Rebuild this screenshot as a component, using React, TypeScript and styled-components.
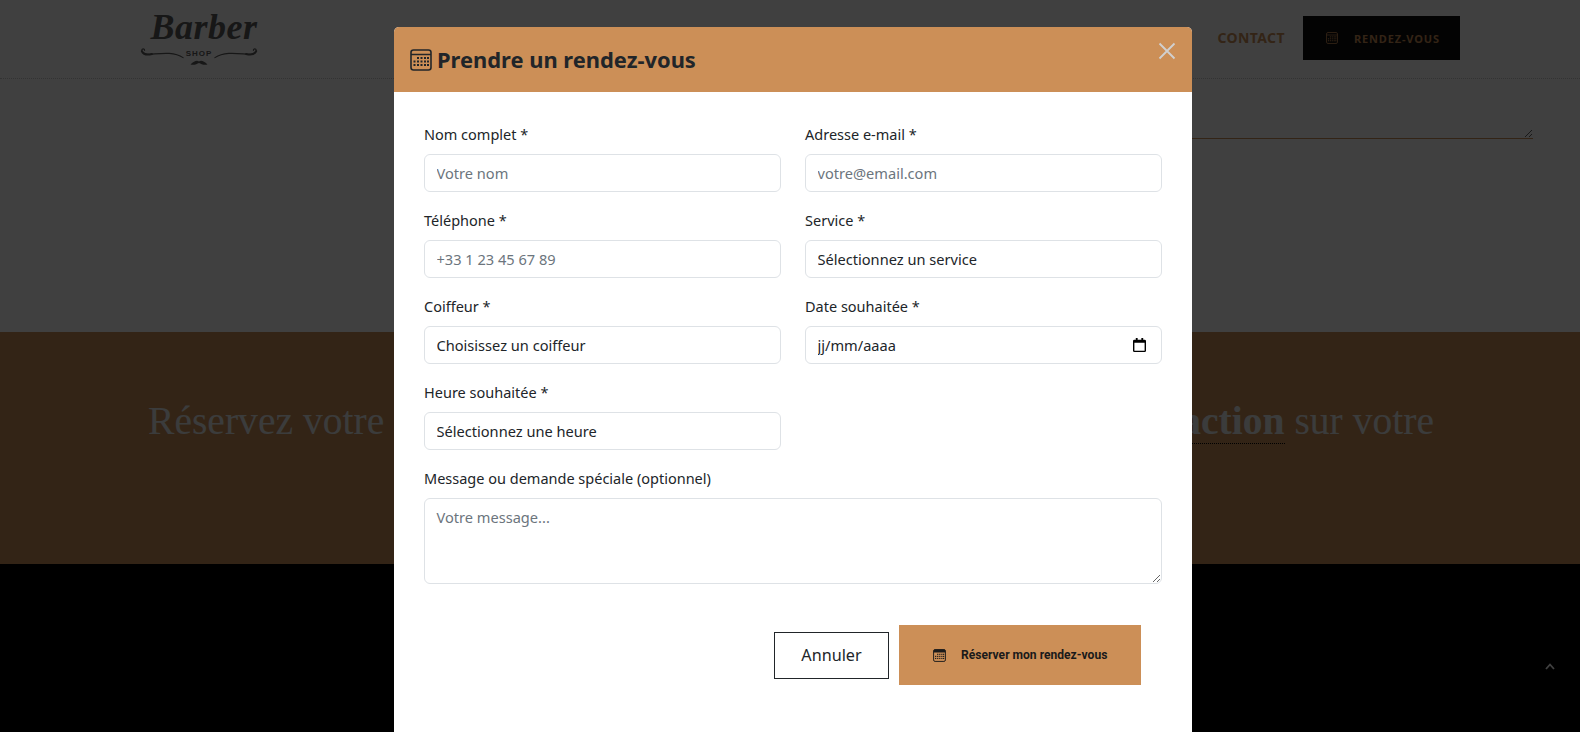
import styled, { createGlobalStyle } from "styled-components";

const GlobalStyle = createGlobalStyle`
  html, body {
    margin: 0;
    padding: 0;
    height: 732px;
    overflow: hidden;
    background: #fff;
    font-family: "Noto Sans", "Open Sans", sans-serif;
    color: #212529;
  }
  * { box-sizing: border-box; }
`;

const Page = styled.div`
  height: 732px;
  overflow: hidden;
  display: flex;
  flex-direction: column;
`;

const Header = styled.header`
  height: 79px;
  flex: none;
  display: flex;
  align-items: flex-start;
  justify-content: space-between;
  padding: 11px 120px 0 140px;
  border-bottom: 1px dotted #ccc;
`;

const Logo = styled.div`
  width: 118px;
  display: flex;
  flex-direction: column;
  align-items: center;
  color: #5c5c5c;
`;

const LogoWord = styled.span`
  font-family: "Liberation Serif", serif;
  font-style: italic;
  font-weight: 700;
  font-size: 36px;
  line-height: 32px;
  letter-spacing: 0.5px;
  margin: 0 0 4px 10px;
`;

const LogoShop = styled.div`
  display: flex;
  align-items: center;
  gap: 2px;
  height: 13px;
`;

const LogoShopText = styled.span`
  font-family: "Liberation Sans", sans-serif;
  font-weight: 700;
  font-size: 8px;
  line-height: 13px;
  letter-spacing: 1px;
`;

const Nav = styled.nav`
  display: flex;
  align-items: center;
  gap: 18px;
  margin-top: 5px;
`;

const NavLink = styled.a`
  font-size: 14px;
  font-weight: 700;
  letter-spacing: 0.4px;
  margin-top: -2px;
  color: #cc8f57;
`;

const NavButton = styled.a`
  width: 157px;
  height: 44px;
  background: #0c0c0c;
  color: #cc8f57;
  display: flex;
  align-items: center;
  gap: 16px;
  padding-left: 23px;
  font-size: 11px;
  font-weight: 700;
  letter-spacing: 0.85px;
`;

const ContactSection = styled.section`
  height: 253px;
  flex: none;
  display: flex;
  justify-content: flex-end;
  padding-right: 47px;
`;

const ContactMessage = styled.textarea`
  width: 500px;
  height: 60px;
  border: none;
  border-bottom: 1px solid #cc8f57;
  background: transparent;
  outline: none;
`;

const CtaBand = styled.section`
  height: 232px;
  flex: none;
  background: #cc8f57;
  padding: 65px 146px 0 148px;
`;

const CtaTitle = styled.h2`
  margin: 0;
  display: flex;
  justify-content: space-between;
  font-family: "Liberation Serif", serif;
  font-weight: 400;
  font-size: 39.6px;
  line-height: 48px;
  color: #eceef0;
`;

const CtaStrong = styled.strong`
  border-bottom: 1px dotted #000;
`;

const Footer = styled.footer`
  flex: 1;
  background: #000;
`;

const ScrollTop = styled.a`
  position: fixed;
  left: 1545px;
  top: 663px;
  width: 10px;
  height: 7px;
  color: #fff;
  display: flex;
`;

const Backdrop = styled.div`
  position: fixed;
  inset: 0;
  background: rgba(0, 0, 0, 0.75);
  display: flex;
  justify-content: center;
  align-items: flex-start;
  padding: 27px 0 0 6px;
  overflow: hidden;
`;

const Modal = styled.div`
  width: 798px;
  background: #fff;
  border-radius: 5px;
  overflow: hidden;
  flex: none;
`;

const ModalHeader = styled.div`
  height: 65px;
  background: #cc8f57;
  display: flex;
  align-items: center;
  justify-content: space-between;
  padding: 1px 16px 0 16px;
`;

const ModalTitle = styled.h5`
  margin: 0;
  display: flex;
  align-items: center;
  gap: 5px;
  font-size: 21.9px;
  font-weight: 700;
  line-height: 30px;
  color: #212529;
`;

const CloseButton = styled.button`
  width: 18px;
  height: 18px;
  padding: 0;
  margin-top: -18px;
  border: none;
  background: none;
  color: #d0d0d0;
  display: flex;
`;

const Form = styled.form`
  padding: 30px 30px 80px;
`;

const FieldGrid = styled.div`
  display: grid;
  grid-template-columns: 1fr 1fr;
  column-gap: 24px;
`;

const Field = styled.div<{ $wide?: boolean }>`
  margin-bottom: 16px;
  grid-column: ${(p) => (p.$wide ? "1 / -1" : "auto")};
`;

const Label = styled.label`
  display: block;
  height: 24px;
  margin-bottom: 8px;
  font-size: 14.5px;
  line-height: 24px;
  color: #212529;
`;

const controlStyles = `
  display: block;
  width: 100%;
  border: 1px solid #dee2e6;
  border-radius: 6px;
  background: #fff;
  padding: 0 11.5px;
  font-family: "Noto Sans", "Open Sans", sans-serif;
  font-size: 14.6px;
  color: #212529;
  outline: none;
  &::placeholder { color: #6c757d; opacity: 1; }
`;

const Input = styled.input`
  ${controlStyles}
  height: 38px;
`;

const Select = styled.select`
  ${controlStyles}
  height: 38px;
  appearance: none;
`;

const DateWrap = styled.div`
  position: relative;
`;

const DateIcon = styled.span`
  position: absolute;
  right: 16px;
  top: 12px;
  width: 13px;
  height: 14px;
  display: flex;
  color: #000;
`;

const Textarea = styled.textarea`
  ${controlStyles}
  height: 86px;
  padding: 8px 11.5px;
  resize: vertical;
`;

const Actions = styled.div`
  display: flex;
  justify-content: flex-end;
  align-items: center;
  gap: 10px;
  margin-top: 25px;
  padding-right: 21px;
`;

const CancelButton = styled.button`
  width: 115px;
  height: 47px;
  background: #fff;
  border: 1px solid #212529;
  font-family: "Noto Sans", "Open Sans", sans-serif;
  font-size: 16.2px;
  color: #212529;
`;

const SubmitButton = styled.button`
  width: 242px;
  height: 60px;
  background: #cc8f57;
  border: none;
  display: flex;
  align-items: center;
  gap: 15px;
  padding: 0 0 0 34px;
  font-family: Roboto, "Noto Sans", sans-serif;
  font-size: 12.1px;
  font-weight: 700;
  color: #1a1a1a;
`;

function CalendarIcon({ size, filled }: { size: number; filled?: boolean }) {
  return (
    <svg width={size} height={size} viewBox="0 0 22 22" fill="none" style={{ flex: "none" }}>
      <rect x="1" y="1" width="20" height="20" rx="2.5" stroke="currentColor" strokeWidth="1.6" />
      {filled ? (
        <path d="M1 3.5a2.5 2.5 0 0 1 2.5-2.5h15A2.5 2.5 0 0 1 21 3.5V6H1z" fill="currentColor" />
      ) : (
        <path d="M1 5.5h20" stroke="currentColor" strokeWidth="1.4" />
      )}
      {[9, 12.5, 16].map((y) =>
        [4.5, 8, 11.5, 15, 18].map((x) =>
          (y === 9 && x < 8) ? null : (
            <rect key={`${x}-${y}`} x={x - 1} y={y - 1} width="2" height="2" fill="currentColor" />
          )
        )
      )}
    </svg>
  );
}

function NativeDateIcon() {
  return (
    <svg width="13" height="14" viewBox="0 0 14 16" fill="none" preserveAspectRatio="none">
      <path d="M3 0h2v2h4V0h2v2h1.5A1.5 1.5 0 0 1 14 3.5v11a1.5 1.5 0 0 1-1.5 1.5h-11A1.5 1.5 0 0 1 0 14.5v-11A1.5 1.5 0 0 1 1.5 2H3zM1.5 5.5v9h11v-9z" fill="currentColor" />
    </svg>
  );
}

function Flourish({ flip }: { flip?: boolean }) {
  return (
    <svg width="44" height="13" viewBox="0 0 48 13" fill="none" style={{ flex: "none", transform: flip ? "scaleX(-1)" : undefined }}>
      <path d="M47 11C38 5 26 6 16 7C9 8 3 7 2 3C2 1 5 1 5 3" stroke="currentColor" strokeWidth="1.3" strokeLinecap="round" />
      <path d="M2 4C4 8 9 8 13 7" stroke="currentColor" strokeWidth="2.2" strokeLinecap="round" />
    </svg>
  );
}

function Moustache() {
  return (
    <svg width="18" height="6" viewBox="0 0 18 6" style={{ display: "block" }}>
      <path d="M9 1.5C7 0 4 1 0.5 4.5C4 5.5 7 4 9 3C11 4 14 5.5 17.5 4.5C14 1 11 0 9 1.5z" fill="currentColor" />
    </svg>
  );
}

export default function App() {
  return (
    <Page>
      <GlobalStyle />
      <Header>
        <Logo>
          <LogoWord>Barber</LogoWord>
          <LogoShop>
            <Flourish />
            <LogoShopText>SHOP</LogoShopText>
            <Flourish flip />
          </LogoShop>
          <Moustache />
        </Logo>
        <Nav>
          <NavLink>CONTACT</NavLink>
          <NavButton>
            <CalendarIcon size={12} />
            RENDEZ-VOUS
          </NavButton>
        </Nav>
      </Header>

      <ContactSection>
        <ContactMessage />
      </ContactSection>

      <CtaBand>
        <CtaTitle>
          <span>Réservez votre</span>
          <span>
            <CtaStrong>satisfaction</CtaStrong> sur votre
          </span>
        </CtaTitle>
      </CtaBand>

      <Footer />

      <ScrollTop>
        <svg width="10" height="7" viewBox="0 0 10 7" fill="none">
          <path d="M1 6l4-4.5L9 6" stroke="currentColor" strokeWidth="1.8" />
        </svg>
      </ScrollTop>

      <Backdrop>
        <Modal>
          <ModalHeader>
            <ModalTitle>
              <CalendarIcon size={22} />
              Prendre un rendez-vous
            </ModalTitle>
            <CloseButton type="button" aria-label="Fermer">
              <svg width="18" height="18" viewBox="0 0 18 18" fill="none">
                <path d="M1.5 1.5l15 15M16.5 1.5l-15 15" stroke="currentColor" strokeWidth="1.8" />
              </svg>
            </CloseButton>
          </ModalHeader>
          <Form>
            <FieldGrid>
              <Field>
                <Label>Nom complet *</Label>
                <Input placeholder="Votre nom" />
              </Field>
              <Field>
                <Label>Adresse e-mail *</Label>
                <Input placeholder="votre@email.com" />
              </Field>
              <Field>
                <Label>Téléphone *</Label>
                <Input placeholder="+33 1 23 45 67 89" />
              </Field>
              <Field>
                <Label>Service *</Label>
                <Select>
                  <option>Sélectionnez un service</option>
                </Select>
              </Field>
              <Field>
                <Label>Coiffeur *</Label>
                <Select>
                  <option>Choisissez un coiffeur</option>
                </Select>
              </Field>
              <Field>
                <Label>Date souhaitée *</Label>
                <DateWrap>
                  <Input defaultValue="jj/mm/aaaa" />
                  <DateIcon>
                    <NativeDateIcon />
                  </DateIcon>
                </DateWrap>
              </Field>
              <Field>
                <Label>Heure souhaitée *</Label>
                <Select>
                  <option>Sélectionnez une heure</option>
                </Select>
              </Field>
              <Field />
              <Field $wide>
                <Label>Message ou demande spéciale (optionnel)</Label>
                <Textarea placeholder="Votre message..." />
              </Field>
            </FieldGrid>
            <Actions>
              <CancelButton type="button">Annuler</CancelButton>
              <SubmitButton type="button">
                <CalendarIcon size={13} filled />
                Réserver mon rendez-vous
              </SubmitButton>
            </Actions>
          </Form>
        </Modal>
      </Backdrop>
    </Page>
  );
}
